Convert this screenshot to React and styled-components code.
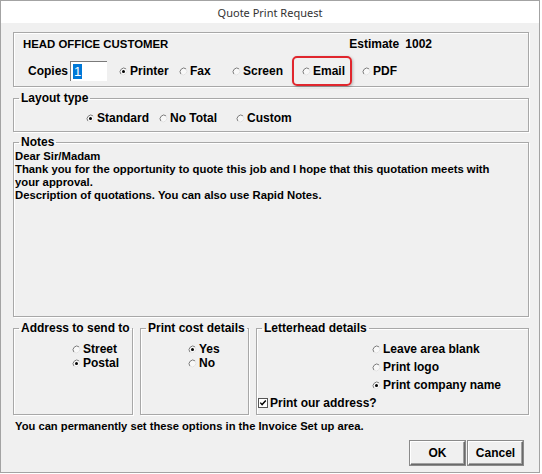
import styled, { createGlobalStyle } from "styled-components";

const GlobalStyle = createGlobalStyle`
  body {
    margin: 0;
    background: #ffffff;
    font-family: "Liberation Sans", Arial, sans-serif;
  }
`;

const Window = styled.div`
  width: 540px;
  height: 473px;
  box-sizing: border-box;
  border: 1px solid #a3a3a3;
  background: #f0f0f0;
  display: flex;
  flex-direction: column;
`;

const TitleBar = styled.div`
  height: 22px;
  background: #ffffff;
  display: flex;
  align-items: center;
  justify-content: center;
  font-family: "Noto Sans", "Open Sans", sans-serif;
  font-size: 11px;
  color: #333;
`;

const Body = styled.div`
  padding: 9px 10px 0 12px;
  display: flex;
  flex-direction: column;
  font-size: 12px;
  font-weight: bold;
  color: #000;
`;

const Box = styled.div`
  border: 1px solid #a8a8a8;
  box-shadow: inset 1px 1px 0 #ffffff, 1px 1px 0 #ffffff;
  padding: ${(p) => p.pad || "0"};
  display: flex;
  flex-direction: column;
`;

const Group = styled.fieldset`
  margin: ${(p) => p.mt || 0}px 0 0 0;
  padding: 0;
  min-width: 0;
  border: 1px solid #a8a8a8;
  box-shadow: inset 1px 1px 0 #ffffff, 1px 1px 0 #ffffff;
  box-sizing: border-box;
  width: ${(p) => (p.w ? `${p.w}px` : "auto")};
  height: ${(p) => (p.h ? `${p.h}px` : "auto")};
  display: flex;
  flex-direction: column;
`;

const Legend = styled.legend`
  padding: 0 2px;
  margin-left: 5px;
  line-height: 14px;
  font-size: 12px;
  font-weight: bold;
`;

const Row = styled.div`
  display: flex;
  align-items: center;
  height: ${(p) => p.h || 14}px;
  padding-left: ${(p) => p.pl || 0}px;
  margin-top: ${(p) => p.mt || 0}px;
  margin-bottom: ${(p) => p.mb || 0}px;
`;

const Name = styled.span`
  flex: 1;
  padding-left: 9px;
  font-size: 11.4px;
`;

const Estimate = styled.span`
  display: flex;
  gap: 6px;
  margin-right: 96px;
`;

const Label = styled.span`
  margin-right: 2px;
`;

const CopiesInput = styled.div`
  width: 37px;
  height: 20px;
  box-sizing: border-box;
  background: #ffffff;
  border-top: 1px solid #7a7a7a;
  border-left: 1px solid #7a7a7a;
  padding: 2px 0 0 2px;
  display: flex;
  align-items: flex-start;
`;

const Selected = styled.span`
  background: #0078d7;
  color: #ffffff;
  line-height: 15px;
  padding: 0 1px;
  font-weight: normal;
  font-size: 13px;
`;

const Option = styled.span`
  display: inline-flex;
  align-items: center;
  gap: 2px;
  height: 14px;
  width: ${(p) => (p.w ? `${p.w}px` : "auto")};
  margin-left: ${(p) => p.ml || 0}px;
  flex-shrink: 0;
`;

const Highlight = styled.span`
  display: inline-flex;
  align-items: center;
  height: 30px;
  width: 60px;
  box-sizing: border-box;
  border: 2px solid #e0262d;
  border-radius: 5px;
  padding-left: 8px;
  box-shadow: 1px 1px 3px rgba(0, 0, 0, 0.25);
`;

const Notes = styled.div`
  line-height: 13px;
  padding: 1px 0 0 1px;
  font-size: 11.3px;
`;

const BottomRow = styled.div`
  display: flex;
  gap: 7px;
  margin-top: 4px;
`;

const Stack = styled.div`
  display: flex;
  flex-direction: column;
  padding-left: ${(p) => p.pl || 0}px;
  padding-top: ${(p) => p.pt || 0}px;
  gap: ${(p) => p.gap || 0}px;
`;

const Footer = styled.div`
  margin-top: 5px;
  padding-left: 2px;
  line-height: 13px;
  font-size: 11.2px;
`;

const Buttons = styled.div`
  display: flex;
  justify-content: flex-end;
  gap: 3px;
  margin-top: 8px;
  padding-right: 6px;
`;

const Button = styled.button`
  width: 55px;
  height: 24px;
  background: #f0f0f0;
  border: 1px solid;
  border-color: #ffffff #6a6a6a #6a6a6a #ffffff;
  box-shadow: inset -1px -1px 0 #a0a0a0, 0 0 0 1px #8a8a8a;
  font-family: "Liberation Sans", Arial, sans-serif;
  font-size: 12px;
  font-weight: bold;
  padding: 0;
`;

function Radio({ on }) {
  return (
    <svg width="9" height="9" viewBox="0 0 9 9">
      <circle cx="4.5" cy="4.5" r="3.7" fill="#f8f8f8" />
      <path d="M7.1 1.9 A3.7 3.7 0 0 0 1.9 7.1" fill="none" stroke="#7a7a7a" strokeWidth="1" />
      <path d="M1.9 7.1 A3.7 3.7 0 0 0 7.1 1.9" fill="none" stroke="#e2e2e2" strokeWidth="1" />
      {on && <circle cx="4.5" cy="4.5" r="1.5" fill="#000" />}
    </svg>
  );
}

function Check() {
  return (
    <svg width="10" height="10" viewBox="0 0 10 10">
      <rect x="0.5" y="0.5" width="9" height="9" fill="#fff" stroke="#555" />
      <path d="M2.3 4.6 L4.1 6.6 L7.8 2.6" fill="none" stroke="#000" strokeWidth="1.4" />
    </svg>
  );
}

function Choice({ on, children, w, ml }) {
  return (
    <Option w={w} ml={ml}>
      <Radio on={on} />
      {children}
    </Option>
  );
}

export default function App() {
  return (
    <>
      <GlobalStyle />
      <Window>
        <TitleBar>Quote Print Request</TitleBar>
        <Body>
          <Box pad="4px 0 0 0">
            <Row>
              <Name>HEAD OFFICE CUSTOMER</Name>
              <Estimate>
                <span>Estimate</span>
                <span>1002</span>
              </Estimate>
            </Row>
            <Row h={30} pl={14} mt={5}>
              <Label>Copies</Label>
              <CopiesInput>
                <Selected>1</Selected>
              </CopiesInput>
              <Choice on w={60} ml={12}>Printer</Choice>
              <Choice w={53}>Fax</Choice>
              <Choice w={60}>Screen</Choice>
              <Highlight>
                <Choice>Email</Choice>
              </Highlight>
              <Choice ml={10}>PDF</Choice>
            </Row>
          </Box>

          <Group mt={4}>
            <Legend>Layout type</Legend>
            <Row pl={72} mt={6} mb={6}>
              <Choice on w={73}>Standard</Choice>
              <Choice w={77}>No Total</Choice>
              <Choice>Custom</Choice>
            </Row>
          </Group>

          <Group mt={3} h={182}>
            <Legend>Notes</Legend>
            <Notes>
              Dear Sir/Madam
              <br />
              Thank you for the opportunity to quote this job and I hope that this quotation meets with
              <br />
              your approval.
              <br />
              Description of quotations. You can also use Rapid Notes.
            </Notes>
          </Group>

          <BottomRow>
            <Group w={120} h={94}>
              <Legend>Address to send to</Legend>
              <Stack pl={58} pt={7}>
                <Choice>Street</Choice>
                <Choice on>Postal</Choice>
              </Stack>
            </Group>
            <Group w={109} h={94}>
              <Legend>Print cost details</Legend>
              <Stack pl={47} pt={7}>
                <Choice on>Yes</Choice>
                <Choice>No</Choice>
              </Stack>
            </Group>
            <Group w={273} h={94}>
              <Legend>Letterhead details</Legend>
              <Stack pl={115} pt={7} gap={4}>
                <Choice>Leave area blank</Choice>
                <Choice>Print logo</Choice>
                <Choice on>Print company name</Choice>
              </Stack>
              <Stack pl={1} pt={4}>
                <Option>
                  <Check />
                  Print our address?
                </Option>
              </Stack>
            </Group>
          </BottomRow>

          <Footer>You can permanently set these options in the Invoice Set up area.</Footer>

          <Buttons>
            <Button>OK</Button>
            <Button>Cancel</Button>
          </Buttons>
        </Body>
      </Window>
    </>
  );
}
